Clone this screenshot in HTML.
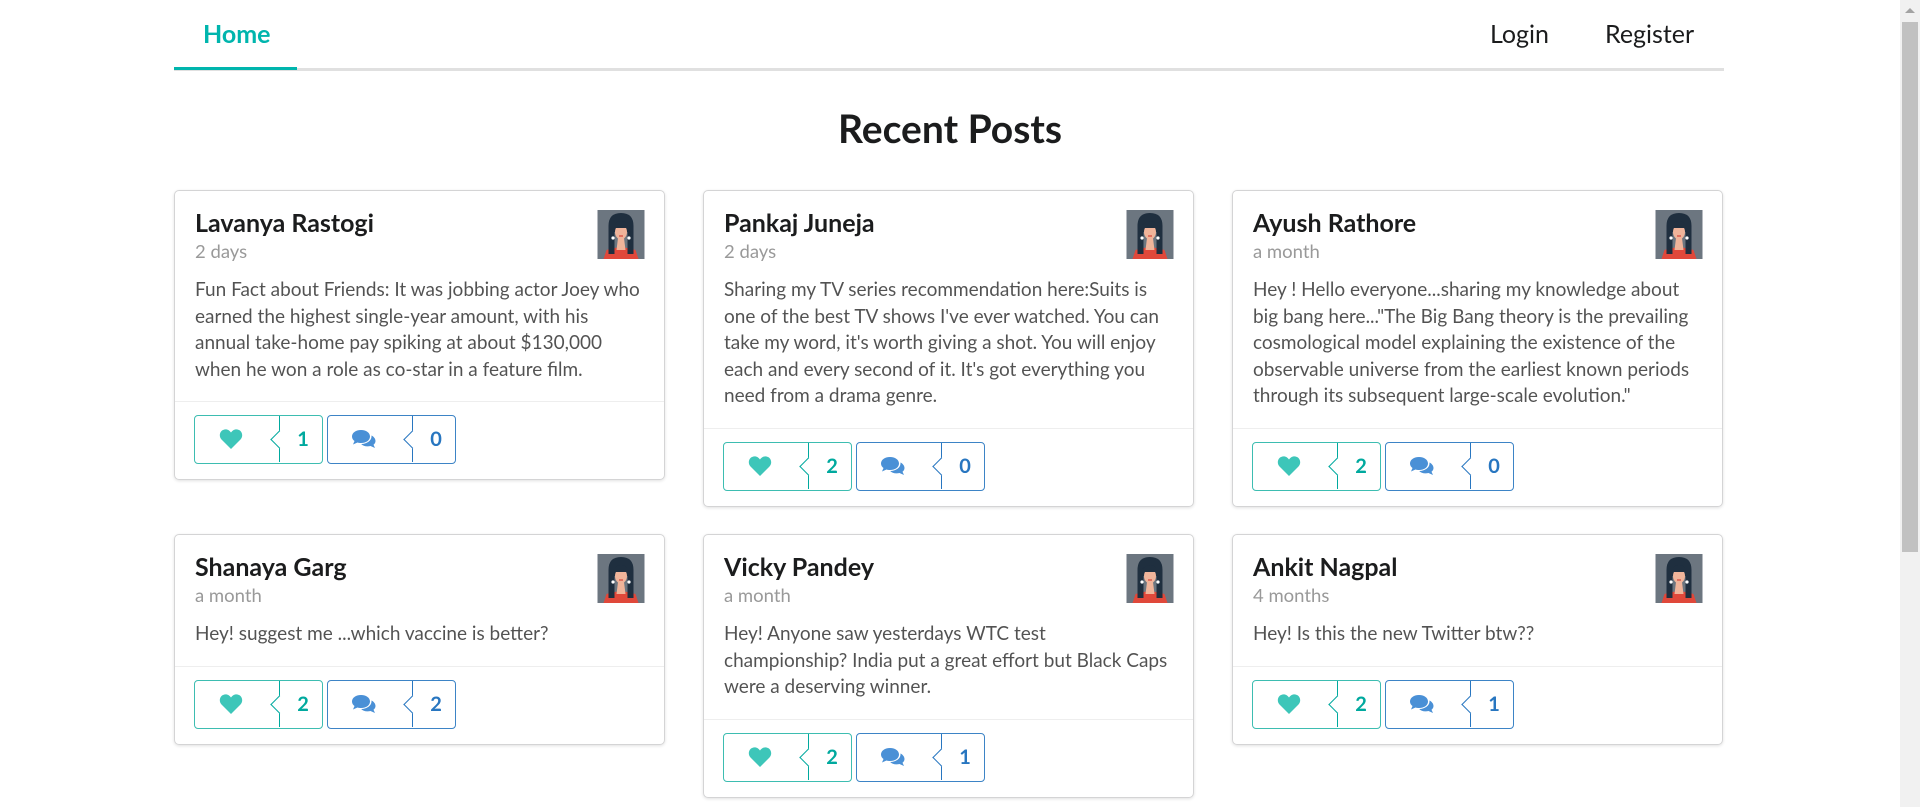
<!DOCTYPE html>
<html><head><meta charset="utf-8"><style>
*{box-sizing:border-box;margin:0;padding:0}
body{width:1920px;height:807px;overflow:hidden;background:#fff;font-family:"Lato","Liberation Sans",sans-serif;position:relative}
.sb{position:absolute;left:1900px;top:0;width:20px;height:807px;background:#f1f1f1}
.sb .th{position:absolute;left:2px;top:22px;width:16px;height:530px;background:#c1c1c1}
.sb .up{position:absolute;left:5px;top:8px;width:0;height:0;border-left:5px solid transparent;border-right:5px solid transparent;border-bottom:5px solid #a3a3a3}
.navline{position:absolute;left:174px;top:68px;width:1550px;height:3px;background:#e0e0e0}
.home{position:absolute;left:174px;top:67px;width:123px;height:3px;background:#00b5ad}
.nav{position:absolute;top:19px;font-size:25px;color:#1b1c1d;line-height:30px}
h1{position:absolute;left:0;width:1900px;top:107px;text-align:center;font-size:39px;line-height:44px;color:#1b1c1d;font-weight:bold}
.card{position:absolute;width:491px;border:1px solid #d4d4d5;border-radius:5px;box-shadow:0 1px 3px rgba(0,0,0,.12)}
.av{position:absolute;right:19px;top:19px;width:48px;height:49px}
.c{padding:18px 20px 18px 20px}
.nm{font-size:25px;line-height:28px;font-weight:bold;color:#1b1c1d}
.mt{margin-top:3px;font-size:18.5px;line-height:22px;color:#999}
.ds{margin-top:15px;font-size:19px;line-height:26.6px;color:rgba(0,0,0,.68)}
.ex{border-top:1px solid #eee;padding:13px 19px 15px}
.b{display:inline-block;position:relative;width:129px;height:49px;border:1.5px solid;border-radius:4px;margin-right:4px;vertical-align:top}
.b.t{border-color:#3dbdb1;color:#00a99e}
.b.u{border-color:#3d84c6;color:#2876c0}
.b .ic{position:absolute;left:0;width:72px;top:0;height:46px;display:flex;align-items:center;justify-content:center}
.b .n{position:absolute;left:84px;right:0;top:0;height:46px;border-left:1.5px solid;display:flex;align-items:center;justify-content:center;font-weight:bold;font-size:20px;padding-left:4px}
.b .n:before{content:"";position:absolute;left:-7px;top:17px;width:12px;height:12px;background:#fff;transform:rotate(45deg);border-left:1.5px solid;border-bottom:1.5px solid}
</style></head><body>
<div class="sb"><div class="up"></div><div class="th"></div></div>
<div class="navline"></div><div class="home"></div>
<div class="nav" style="left:203px;color:#00b5ad;font-weight:bold">Home</div>
<div class="nav" style="left:1490px">Login</div>
<div class="nav" style="left:1605px">Register</div>
<h1>Recent Posts</h1>

<svg width="0" height="0" style="position:absolute"><defs>
<symbol id="av" viewBox="0 0 47 49"><rect width="47" height="49" fill="#6c7680"/><path d="M6 49 L9 40 Q23 35 38 40 L41 49Z" fill="#e0483a"/><path d="M11 16 Q11 3 23.5 3 Q36 3 36 16 L36 44 L30 44 L30 22 L17 22 L17 44 L11 44Z" fill="#1f2f3f"/><ellipse cx="23.5" cy="22" rx="6" ry="7.5" fill="#f0b49a"/><path d="M20.5 28 L26.5 28 L28 40 L19 40Z" fill="#f0b49a"/><path d="M16 15 Q23.5 7 31 15 L31 18 L16 18Z" fill="#1f2f3f"/><circle cx="15.5" cy="28" r="1.6" fill="#fff"/><circle cx="31.5" cy="28" r="1.6" fill="#fff"/><path d="M21.5 26 L25.5 26" stroke="#d4453a" stroke-width="1.2"/></symbol>
<symbol id="ht" viewBox="0 0 24 22"><path d="M12 21 L2.5 11.5 C-0.5 8.5 0.5 2.5 5.5 1.5 C8.5 1 10.5 2.5 12 4.5 C13.5 2.5 15.5 1 18.5 1.5 C23.5 2.5 24.5 8.5 21.5 11.5Z" fill="#3dc6b9"/></symbol>
<symbol id="cm" viewBox="0 0 26 20"><path d="M10 1 C4.5 1 1 4 1 7.5 C1 9.5 2 11 3.5 12 L2 15.5 L6.5 13.5 C7.5 13.8 8.8 14 10 14 C15.5 14 19 11 19 7.5 C19 4 15.5 1 10 1Z" fill="#4a90d6"/><path d="M20.5 6.5 C22.5 7.5 24.5 9.5 24.5 12 C24.5 13.5 23.7 14.8 22.5 15.7 L24 19 L19.5 17 C18.5 17.3 17.5 17.4 16.5 17.4 C13.8 17.4 11.5 16.4 10.2 15 C16 15 20.5 11.5 20.5 7.5Z" fill="#4a90d6"/></symbol>
</defs></svg>

<div class="card" style="left:174px;top:190px"><svg class="av"><use href="#av"/></svg><div class="c"><div class="nm">Lavanya Rastogi</div><div class="mt">2 days</div><div class="ds">Fun Fact about Friends: It was jobbing actor Joey who earned the highest single-year amount, with his annual take-home pay spiking at about $130,000 when he won a role as co-star in a feature film.</div></div><div class="ex"><span class="b t"><span class="ic"><svg width="24" height="22"><use href="#ht"/></svg></span><span class="n">1</span></span><span class="b u"><span class="ic"><svg width="26" height="20"><use href="#cm"/></svg></span><span class="n">0</span></span></div></div>

<div class="card" style="left:703px;top:190px"><svg class="av"><use href="#av"/></svg><div class="c"><div class="nm">Pankaj Juneja</div><div class="mt">2 days</div><div class="ds">Sharing my TV series recommendation here:Suits is one of the best TV shows I've ever watched. You can take my word, it's worth giving a shot. You will enjoy each and every second of it. It's got everything you need from a drama genre.</div></div><div class="ex"><span class="b t"><span class="ic"><svg width="24" height="22"><use href="#ht"/></svg></span><span class="n">2</span></span><span class="b u"><span class="ic"><svg width="26" height="20"><use href="#cm"/></svg></span><span class="n">0</span></span></div></div>

<div class="card" style="left:1232px;top:190px"><svg class="av"><use href="#av"/></svg><div class="c"><div class="nm">Ayush Rathore</div><div class="mt">a month</div><div class="ds">Hey ! Hello everyone...sharing my knowledge about big bang here..."The Big Bang theory is the prevailing cosmological model explaining the existence of the observable universe from the earliest known periods through its subsequent large-scale evolution."</div></div><div class="ex"><span class="b t"><span class="ic"><svg width="24" height="22"><use href="#ht"/></svg></span><span class="n">2</span></span><span class="b u"><span class="ic"><svg width="26" height="20"><use href="#cm"/></svg></span><span class="n">0</span></span></div></div>

<div class="card" style="left:174px;top:534px"><svg class="av"><use href="#av"/></svg><div class="c"><div class="nm">Shanaya Garg</div><div class="mt">a month</div><div class="ds">Hey! suggest me ...which vaccine is better?</div></div><div class="ex"><span class="b t"><span class="ic"><svg width="24" height="22"><use href="#ht"/></svg></span><span class="n">2</span></span><span class="b u"><span class="ic"><svg width="26" height="20"><use href="#cm"/></svg></span><span class="n">2</span></span></div></div>

<div class="card" style="left:703px;top:534px"><svg class="av"><use href="#av"/></svg><div class="c"><div class="nm">Vicky Pandey</div><div class="mt">a month</div><div class="ds">Hey! Anyone saw yesterdays WTC test championship? India put a great effort but Black Caps were a deserving winner.</div></div><div class="ex"><span class="b t"><span class="ic"><svg width="24" height="22"><use href="#ht"/></svg></span><span class="n">2</span></span><span class="b u"><span class="ic"><svg width="26" height="20"><use href="#cm"/></svg></span><span class="n">1</span></span></div></div>

<div class="card" style="left:1232px;top:534px"><svg class="av"><use href="#av"/></svg><div class="c"><div class="nm">Ankit Nagpal</div><div class="mt">4 months</div><div class="ds">Hey! Is this the new Twitter btw??</div></div><div class="ex"><span class="b t"><span class="ic"><svg width="24" height="22"><use href="#ht"/></svg></span><span class="n">2</span></span><span class="b u"><span class="ic"><svg width="26" height="20"><use href="#cm"/></svg></span><span class="n">1</span></span></div></div>
</body></html>
